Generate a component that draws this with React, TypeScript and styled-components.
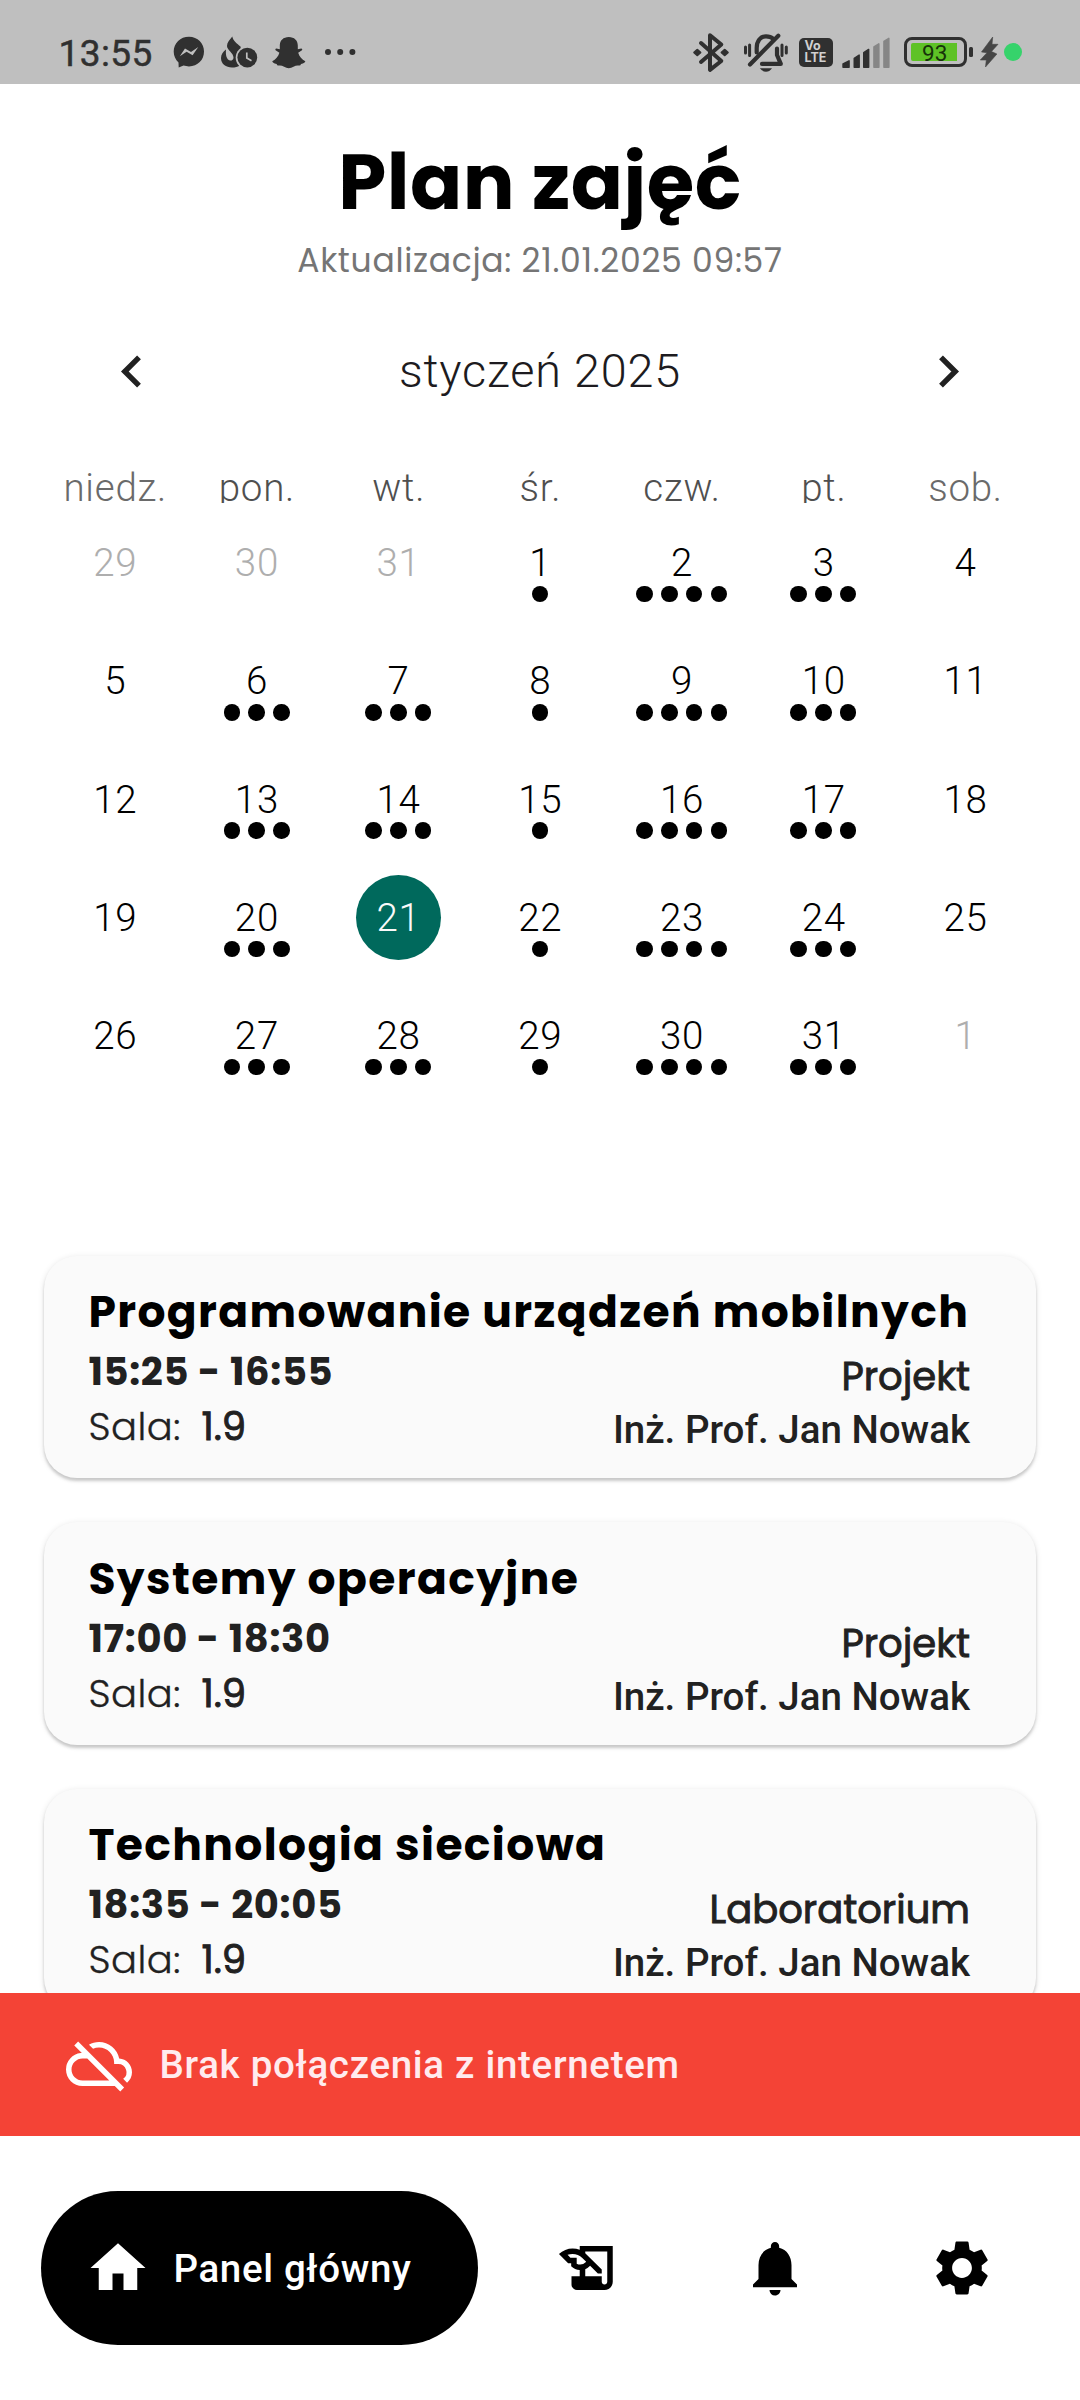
import React from "react";
import styled, { createGlobalStyle, css } from "styled-components";
import {
  MdHome,
  MdNotifications,
  MdSettings,
  MdHistoryEdu,
  MdOutlineCloudOff,
} from "react-icons/md";

const INK = "#303030";
const BAR = "#bfbfbf";

const GlobalStyle = createGlobalStyle`
  *, *::before, *::after { box-sizing: border-box; }
  body { margin: 0; background: #fff; }
  svg { display: block; flex: none; overflow: visible; }
`;

const geometric = css`
  font-family: Poppins, Inter, "Open Sans", sans-serif;
`;

/* regular outlines thickened a little, lighter than the real medium cut */
const thickened = css`
  font-weight: 400;
  -webkit-text-stroke: 0.9px currentColor;
`;

const Screen = styled.div`
  display: flex;
  flex-direction: column;
  width: 1080px;
  height: 2400px;
  overflow: hidden;
  background: #fff;
  color: #212121;
  font-family: Roboto, "Noto Sans", sans-serif;
  font-size: 38.5px;
  white-space: nowrap;
`;

/* ---------- status bar ---------- */

const StatusBar = styled.div`
  display: flex;
  flex: none;
  justify-content: space-between;
  height: 84px;
  padding: 20px 58px 0 58.6px;
  background: ${BAR};
  color: ${INK};
`;

const StatusGroup = styled.div`
  display: flex;
  align-items: center;
`;

const Slot = styled.div<{ $gap: number }>`
  display: flex;
  align-items: center;
  margin-left: ${(p) => p.$gap}px;
`;

const Clock = styled.span`
  padding-top: 3px;
  font-size: 37px;
  font-weight: 400;
  letter-spacing: 0.4px;
  line-height: 44px;
  -webkit-text-stroke: 0.5px currentColor;
`;

const Volte = styled.div`
  display: flex;
  flex-direction: column;
  justify-content: center;
  width: 34px;
  height: 29px;
  padding-left: 5.5px;
  border-radius: 5px;
  background: ${INK};
  color: #d0d0d0;
  font-family: Inter, sans-serif;
  font-size: 12.5px;
  font-weight: 700;
  line-height: 12px;
`;

const BatteryBody = styled.div`
  display: flex;
  align-items: center;
  width: 63px;
  height: 30px;
  padding-left: 3.5px;
  border: 3px solid ${INK};
  border-radius: 8px;
`;

const BatteryLevel = styled.div`
  display: flex;
  align-items: center;
  justify-content: center;
  width: 46.5px;
  height: 18.5px;
  border-radius: 2px 0 0 2px;
  background: #5ec226;
  color: #17330a;
  font-size: 22.5px;
  line-height: 20px;
  padding: 1px 0 0 2px;
`;

const BatteryNub = styled.div`
  width: 4px;
  height: 10px;
  margin-left: 2px;
  border-radius: 1.5px;
  background: ${INK};
`;

const PrivacyDot = styled.div`
  width: 18px;
  height: 18px;
  border-radius: 50%;
  background: #36d36b;
`;

/* ---------- header ---------- */

const Header = styled.header`
  display: flex;
  flex: none;
  flex-direction: column;
  align-items: center;
  gap: 14.3px;
  padding-top: 57.5px;
`;

const Title = styled.h1`
  ${geometric}
  margin: 0;
  color: #000;
  font-size: 77px;
  font-weight: 700;
  letter-spacing: 0.53px;
  line-height: 80px;
`;

const Updated = styled.div`
  ${geometric}
  color: #757575;
  font-size: 33px;
  letter-spacing: 0.69px;
  line-height: 50px;
`;

/* ---------- calendar ---------- */

const Calendar = styled.section`
  display: flex;
  flex: none;
  flex-direction: column;
  padding: 55.7px 44px 0;
`;

const MonthRow = styled.div`
  display: flex;
  align-items: center;
  justify-content: space-between;
  height: 60px;
  padding: 0 77.4px;
`;

const Month = styled.div`
  color: #1d1b20;
  font-size: 46.75px;
  font-weight: 300;
  letter-spacing: 0.83px;
`;

const Week = styled.div`
  display: grid;
  grid-template-columns: repeat(7, 1fr);
`;

const WeekNames = styled(Week)`
  height: 44px;
  margin-top: 57.8px;
  overflow: hidden;
`;

const WeekName = styled.div<{ $weekend: boolean }>`
  padding-left: 0.75px;
  color: ${(p) => (p.$weekend ? "#6a6a6a" : "#4f4f4f")};
  font-weight: 300;
  letter-spacing: 0.75px;
  line-height: 57.6px;
  text-align: center;
`;

const DayCell = styled.div`
  position: relative;
  display: flex;
  align-items: center;
  justify-content: center;
  height: 118.25px;
`;

const DayNumber = styled.div<{ $tone: "normal" | "outside" | "selected" }>`
  display: flex;
  align-items: center;
  justify-content: center;
  width: 85.25px;
  height: 85.25px;
  padding: 0.6px 0 0 0.7px;
  border-radius: 50%;
  background: ${(p) => (p.$tone === "selected" ? "#00695c" : "transparent")};
  color: ${(p) =>
    p.$tone === "selected" ? "#fafafa" : p.$tone === "outside" ? "#aeaeae" : "#000"};
  font-weight: 300;
  letter-spacing: 0.7px;
`;

const Markers = styled.div`
  position: absolute;
  top: 82.7px;
  left: 0;
  right: 0;
  display: flex;
  justify-content: center;
  gap: 8.25px;
`;

const Marker = styled.i`
  width: 16.5px;
  height: 16.5px;
  border-radius: 50%;
  background: #000;
`;

/* ---------- lessons ---------- */

const Lessons = styled.main`
  display: flex;
  flex: 1 1 0;
  flex-direction: column;
  gap: 43.8px;
  min-height: 0;
  margin-top: 141px;
  padding: 20px 44px 0;
  overflow: hidden;
`;

const LessonCard = styled.article`
  flex: none;
  height: 222.7px;
  padding: 29.9px 66px 0 44.4px;
  border-radius: 33px;
  background: #fafafa;
  box-shadow: 0 3px 3px rgba(0, 0, 0, 0.17), 0 1px 6px rgba(0, 0, 0, 0.1);
`;

const LessonName = styled.h2`
  ${geometric}
  margin: 0;
  color: #000;
  font-size: 44px;
  font-weight: 700;
  letter-spacing: 1.38px;
  line-height: 54px;
`;

const LessonBody = styled.div`
  display: flex;
  justify-content: space-between;
`;

const LeftColumn = styled.div`
  padding-top: 4.9px;
  line-height: 55px;
  ${geometric}
`;

const RightColumn = styled.div`
  padding-top: 10.6px;
  font-weight: 500;
  line-height: 53px;
  text-align: right;
`;

const Time = styled.div`
  font-weight: 700;
  letter-spacing: 0.68px;
`;

const Room = styled.div`
  display: flex;
`;

const RoomLabel = styled.span`
  width: 113px;
  font-weight: 300;
  letter-spacing: 0.5px;
  -webkit-text-stroke: 0.3px currentColor;
`;

const RoomNumber = styled.span`
  ${thickened}
`;

const Kind = styled.div`
  ${geometric}
  ${thickened}
`;

/* ---------- offline banner and navigation ---------- */

const OfflineBanner = styled.div`
  display: flex;
  flex: none;
  align-items: center;
  gap: 27.5px;
  height: 142.7px;
  padding-left: 66px;
  background: #f44336;
  color: #ffebee;
  font-weight: 500;
  letter-spacing: 0.7px;
`;

const NavBar = styled.nav`
  display: flex;
  flex: none;
  align-items: center;
  height: 264.3px;
  padding: 0 0 0 41.25px;
  color: #000;
`;

const NavPill = styled.div`
  display: flex;
  align-items: center;
  gap: 22px;
  width: 437px;
  height: 154px;
  padding-left: 44.2px;
  border-radius: 77px;
  background: #000;
  color: #fff;
  font-weight: 500;
  letter-spacing: 0.65px;
`;

const NavLabel = styled.span`
  padding-top: 1.5px;
`;

const NavIcons = styled.div`
  display: flex;
  gap: 120.7px;
  margin-left: 77px;
`;

/* ---------- drawings ---------- */

const MessengerIcon = () => (
  <svg width="32" height="32" viewBox="0 0 32 32">
    <path
      fill={INK}
      d="M16 .7C7.3.7.7 7 .7 15.6c0 4.4 1.8 8.200 4.800 10.900L5.700 31.600 10.500 29.600c1.700.5 3.600.8 5.500.8 8.700 0 15-6.300 15-14.800S24.700.7 16 .7Z"
    />
    <path fill={BAR} d="M6.800 20.300 12 12.600 18 16 25.300 11 19.600 19.200 13.600 15.800Z" />
  </svg>
);

const FlameClockIcon = () => (
  <svg width="38" height="33" viewBox="0 0 38 33">
    <path
      fill={INK}
      d="M12.300.5C9.500 4 7 6.500 7 10c0 4 6.500 7 6.500 11.500 0 2.500-2 3.300-3.500 3-3.500-1-4.500-5.500-4-11C3 15.500 1 18.500 1 22c0 6 5 9.500 11 9.500 3 0 6-.7 7-1.500l3-10-1.500-9.500C17 7.500 13 5 12.300.5Z"
    />
    <circle cx="27.300" cy="21.600" r="11.600" fill={BAR} />
    <circle cx="27.300" cy="21.600" r="9.900" fill={INK} />
    <path d="M26.800 16.500V22l4.700 2.700" fill="none" stroke={BAR} strokeWidth="1.700" />
  </svg>
);

const GhostIcon = () => (
  <svg width="35" height="33" viewBox="0 0 35 33">
    <path
      fill={INK}
      d="M17.800 1C23.300 1 26.800 4.500 26.800 9.500V13.300L30.200 12.500Q32 12.700 31 14.200L27.200 16.800C28.300 20.500 31 23.500 34.300 25.200Q34.300 27 30 28Q29.500 29.500 28.500 29.600Q25 29 23 30.500Q20 32.300 17.800 32.300Q15.600 32.300 12.600 30.500Q10.600 29 7.100 29.600Q6.100 29.500 5.600 28Q1.300 27 1.300 25.200C4.600 23.500 7.300 20.500 8.400 16.800L4.600 14.200Q3.600 12.700 5.400 12.500L8.800 13.300V9.500C8.800 4.500 12.300 1 17.800 1Z"
    />
  </svg>
);

const MoreIcon = () => (
  <svg width="30" height="8" viewBox="0 0 30 8" fill={INK}>
    <circle cx="3" cy="4" r="3" />
    <circle cx="15.200" cy="4" r="3" />
    <circle cx="27.400" cy="4" r="3" />
  </svg>
);

const BluetoothIcon = () => (
  <svg width="36" height="39" viewBox="0 0 36 39">
    <path
      d="M8 10 28.300 28 17 36.800V2.200L28.300 11.500 8 29"
      fill="none"
      stroke={INK}
      strokeWidth="4"
      strokeLinecap="round"
      strokeLinejoin="round"
    />
    <path
      fill={INK}
      stroke={INK}
      strokeWidth="2"
      strokeLinejoin="round"
      d="M1.200 19.500 4.300 16.700 7.400 19.500 4.300 22.300ZM28.600 19.500 31.700 16.700 34.800 19.500 31.700 22.300Z"
    />
  </svg>
);

const MutedBellIcon = () => (
  <svg width="44" height="38" viewBox="0 -1 44 38">
    <g fill="none" stroke={INK} strokeLinecap="round" strokeLinejoin="round">
      <path
        d="M12.700 18.500V14C12.700 7 16.500 2.300 22 2.300c3.300 0 5.600 1 7.500 2.700M18 29.900H36.800L33 21V14.500"
        strokeWidth="4.200"
      />
      <path d="M34.300 1.800 6 30.500" strokeWidth="4.200" />
      <path d="M1.500 13v6M5.600 11v10.500M38 11v10.500M42.300 13v6" strokeWidth="3" />
    </g>
    <path fill={INK} d="M15.800 34.200H28Q25.500 37.700 22 37.700T15.800 34.200Z" />
  </svg>
);

const SIGNAL_BARS = [
  { x: 0.3, w: 7.5, top: 23, on: true },
  { x: 11.5, w: 6.4, top: 17.3, on: true },
  { x: 21, w: 6.4, top: 11.7, on: true },
  { x: 31.2, w: 6.4, top: 6, on: false },
  { x: 41.2, w: 6.4, top: 0.5, on: false },
];

const SignalIcon = () => (
  <svg width="48" height="31" viewBox="0 0 48 31">
    {SIGNAL_BARS.map((b) => (
      <path
        key={b.x}
        fill={b.on ? INK : "#868686"}
        stroke={b.on ? INK : "#868686"}
        strokeLinejoin="round"
        strokeWidth="1.500"
        d={`M${b.x + 0.75} 30.200V${b.top + 4}L${b.x + b.w - 0.75} ${b.top + 0.8}V30.200Z`}
      />
    ))}
  </svg>
);

const BoltIcon = () => (
  <svg width="18" height="30" viewBox="0 0 18 30">
    <path
      fill="#464646"
      stroke="#464646"
      strokeWidth="0.600"
      strokeLinejoin="round"
      d="M12.700 0 1.500 15 7 15.700.3 23 6.300 23 5.500 30 16.900 17 11.500 14.500 18 7.300 12 7.300Z"
    />
  </svg>
);

const Chevron = ({ right }: { right?: boolean }) => (
  <svg width="20" height="33" viewBox="0 0 20 33">
    <path
      d={right ? "M2 2.300 16.200 16.500 2 30.700" : "M18 2.300 3.800 16.500 18 30.700"}
      fill="none"
      stroke="#212121"
      strokeWidth="5.400"
    />
  </svg>
);

/* ---------- data ---------- */

const WEEK_NAMES = ["niedz.", "pon.", "wt.", "śr.", "czw.", "pt.", "sob."];
const LESSONS_PER_WEEKDAY = [0, 3, 3, 1, 4, 3, 0];
const SELECTED_DAY = 21;
const CELLS = Array.from({ length: 35 }, (_, i) => {
  const offset = i - 2;
  if (offset < 1) return { day: 31 + offset, outside: true, dots: 0 };
  if (offset > 31) return { day: offset - 31, outside: true, dots: 0 };
  return {
    day: offset,
    outside: false,
    dots: offset === SELECTED_DAY ? 0 : LESSONS_PER_WEEKDAY[i % 7],
  };
});

const LESSONS = [
  { name: "Programowanie urządzeń mobilnych", time: "15:25 - 16:55", kind: "Projekt" },
  { name: "Systemy operacyjne", time: "17:00 - 18:30", kind: "Projekt" },
  { name: "Technologia sieciowa", time: "18:35 - 20:05", kind: "Laboratorium" },
];

export default function App() {
  return (
    <>
      <GlobalStyle />
      <Screen>
        <StatusBar>
          <StatusGroup>
            <Clock>13:55</Clock>
            <Slot $gap={20.4}><MessengerIcon /></Slot>
            <Slot $gap={15}><FlameClockIcon /></Slot>
            <Slot $gap={13}><GhostIcon /></Slot>
            <Slot $gap={19}><MoreIcon /></Slot>
          </StatusGroup>
          <StatusGroup>
            <BluetoothIcon />
            <Slot $gap={15}><MutedBellIcon /></Slot>
            <Slot $gap={11}>
              <Volte>
                <span>Vo</span>
                <span>LTE</span>
              </Volte>
            </Slot>
            <Slot $gap={9}><SignalIcon /></Slot>
            <Slot $gap={14}>
              <BatteryBody>
                <BatteryLevel>93</BatteryLevel>
              </BatteryBody>
              <BatteryNub />
            </Slot>
            <Slot $gap={7}><BoltIcon /></Slot>
            <Slot $gap={6}><PrivacyDot /></Slot>
          </StatusGroup>
        </StatusBar>

        <Header>
          <Title>Plan zajęć</Title>
          <Updated>Aktualizacja: 21.01.2025 09:57</Updated>
        </Header>

        <Calendar>
          <MonthRow>
            <Chevron />
            <Month>styczeń 2025</Month>
            <Chevron right />
          </MonthRow>
          <WeekNames>
            {WEEK_NAMES.map((name, i) => (
              <WeekName key={name} $weekend={i === 0 || i === 6}>{name}</WeekName>
            ))}
          </WeekNames>
          <Week>
            {CELLS.map((c, i) => (
              <DayCell key={i}>
                <DayNumber
                  $tone={c.outside ? "outside" : c.day === SELECTED_DAY ? "selected" : "normal"}
                >
                  {c.day}
                </DayNumber>
                {c.dots > 0 && (
                  <Markers>
                    {Array.from({ length: c.dots }, (_, d) => <Marker key={d} />)}
                  </Markers>
                )}
              </DayCell>
            ))}
          </Week>
        </Calendar>

        <Lessons>
          {LESSONS.map((l) => (
            <LessonCard key={l.name}>
              <LessonName>{l.name}</LessonName>
              <LessonBody>
                <LeftColumn>
                  <Time>{l.time}</Time>
                  <Room>
                    <RoomLabel>Sala:</RoomLabel>
                    <RoomNumber>1.9</RoomNumber>
                  </Room>
                </LeftColumn>
                <RightColumn>
                  <Kind>{l.kind}</Kind>
                  <div>Inż. Prof. Jan Nowak</div>
                </RightColumn>
              </LessonBody>
            </LessonCard>
          ))}
        </Lessons>

        <OfflineBanner>
          <MdOutlineCloudOff size={66} color="#fff" />
          <span>Brak połączenia z internetem</span>
        </OfflineBanner>

        <NavBar>
          <NavPill>
            <MdHome size={66} />
            <NavLabel>Panel główny</NavLabel>
          </NavPill>
          <NavIcons>
            <MdHistoryEdu size={66} />
            <MdNotifications size={66} />
            <MdSettings size={66} />
          </NavIcons>
        </NavBar>
      </Screen>
    </>
  );
}
